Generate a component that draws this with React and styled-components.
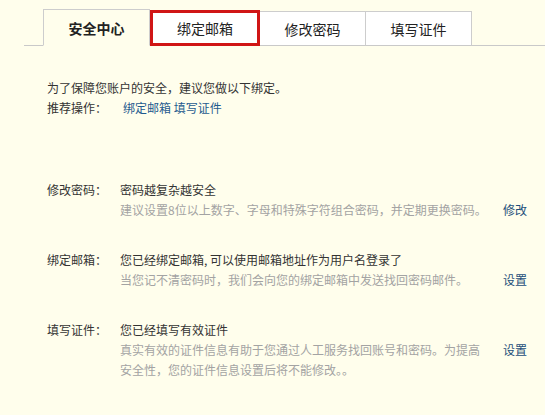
import styled, { createGlobalStyle } from "styled-components";

const GlobalStyle = createGlobalStyle`
  html, body {
    margin: 0;
    padding: 0;
    background: #fffeec;
  }
  body {
    font-family: "Noto Sans CJK SC", "Noto Sans", sans-serif;
    font-size: 12px;
    color: #333;
  }
`;

const tabs = [
  { title: "安全中心", active: true },
  { title: "绑定邮箱", marked: true },
  { title: "修改密码" },
  { title: "填写证件" },
];

const rows = [
  {
    label: "修改密码：",
    title: "密码越复杂越安全",
    desc: "建议设置8位以上数字、字母和特殊字符组合密码，并定期更换密码。",
    action: "修改",
  },
  {
    label: "绑定邮箱：",
    title: "您已经绑定邮箱, 可以使用邮箱地址作为用户名登录了",
    desc: "当您记不清密码时，我们会向您的绑定邮箱中发送找回密码邮件。",
    action: "设置",
  },
  {
    label: "填写证件：",
    title: "您已经填写有效证件",
    desc: "真实有效的证件信息有助于您通过人工服务找回账号和密码。为提高安全性，您的证件信息设置后将不能修改。。",
    action: "设置",
  },
];

const App = () => {
  return (
    <>
      <GlobalStyle />
      <Page>
        <TabBar>
          {tabs.map((tab, index) => (
            <Tab key={index} $active={tab.active} $marked={tab.marked}>
              {tab.title}
            </Tab>
          ))}
        </TabBar>

        <Content>
          <Intro>
            <p>为了保障您账户的安全，建议您做以下绑定。</p>
            <p>
              <span className="label">推荐操作：</span>
              <Link>绑定邮箱</Link> <Link>填写证件</Link>
            </p>
          </Intro>

          {rows.map((row, index) => (
            <Row key={index}>
              <Label>{row.label}</Label>
              <Title>{row.title}</Title>
              <Desc>{row.desc}</Desc>
              <Action>{row.action}</Action>
            </Row>
          ))}
        </Content>
      </Page>
    </>
  );
};

const Page = styled.div`
  width: 545px;
  height: 415px;
  padding-top: 9px;
  box-sizing: border-box;
  overflow: hidden;
`;

const TabBar = styled.div`
  margin-left: 24px;
  padding-left: 19px;
  height: 36px;
  display: flex;
  align-items: flex-end;
  border-bottom: 1px solid #c9c9c9;
`;

const Tab = styled.div`
  box-sizing: border-box;
  width: ${(p) => (p.$marked ? "110px" : "107px")};
  height: ${(p) => (p.$active ? "37px" : "35px")};
  margin-bottom: -1px;
  margin-left: ${(p) => (p.$active ? "0" : "-1px")};
  display: flex;
  align-items: center;
  justify-content: center;
  font-size: 14px;
  font-weight: ${(p) => (p.$active ? "bold" : "normal")};
  color: #222;
  background: ${(p) => (p.$active ? "#fffeec" : "#fff")};
  border: 1px solid #cdcdcd;
  border-bottom-color: ${(p) => (p.$active ? "#fffeec" : "#c9c9c9")};
  position: relative;
  z-index: ${(p) => (p.$marked ? 2 : 1)};

  ${(p) =>
    p.$marked &&
    `
    border: 3px solid #d01515;
    height: 36px;
    margin-left: 0;
  `}
`;

const Content = styled.div`
  padding: 32px 0 0 47px;
`;

const Intro = styled.div`
  margin-bottom: 61px;

  p {
    margin: 0;
    line-height: 20px;
  }
  .label {
    display: inline-block;
    width: 76px;
  }
`;

const Link = styled.a`
  color: #1f5b8f;
  cursor: pointer;
`;

const Row = styled.div`
  display: grid;
  grid-template-columns: 73px 371px auto;
  grid-template-rows: 21px auto;
  margin-bottom: 29px;
`;

const Label = styled.div`
  grid-row: 1;
  grid-column: 1;
  line-height: 21px;
  color: #333;
`;

const Title = styled.div`
  grid-row: 1;
  grid-column: 2 / 4;
  line-height: 21px;
  color: #333;
`;

const Desc = styled.div`
  grid-row: 2;
  grid-column: 2;
  line-height: 20px;
  color: #a3a3a3;
`;

const Action = styled.a`
  grid-row: 2;
  grid-column: 3;
  padding-left: 12px;
  line-height: 20px;
  color: #1d4f7a;
  cursor: pointer;
`;

export default App;
